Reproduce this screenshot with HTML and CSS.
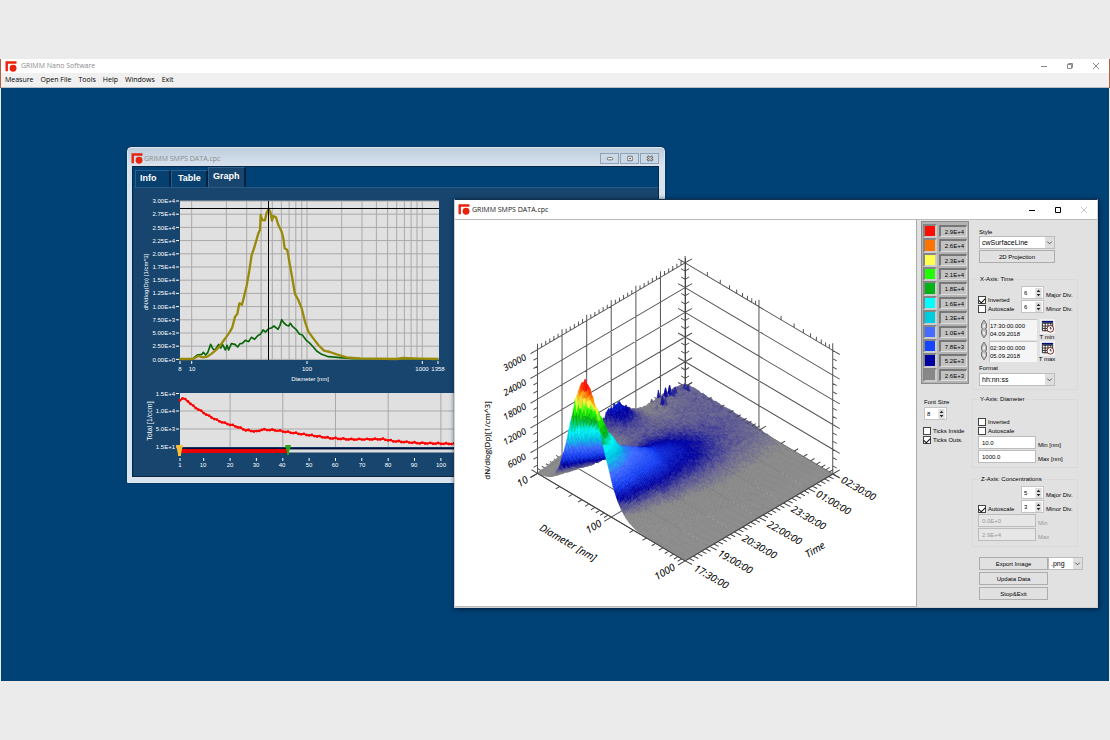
FILE: index.html
```html
<!DOCTYPE html>
<html lang="en">
<head>
<meta charset="utf-8">
<title>GRIMM Nano Software</title>
<link rel="stylesheet" href="styles.css">
</head>
<body>
<svg class="defs" aria-hidden="true">
  <symbol id="logo" viewBox="0 0 34 32"><path d="M1 1h32v7H8v22H1z" fill="#e8240c"/><circle cx="23" cy="21" r="10" fill="#e8240c"/></symbol>
  <symbol id="min" viewBox="0 0 10 10"><path d="M2 5.500h6" stroke="currentColor"/></symbol>
  <symbol id="max" viewBox="0 0 10 10"><path d="M2.500 2.500h5v5h-5z" fill="none" stroke="currentColor"/></symbol>
  <symbol id="restore" viewBox="0 0 10 10"><path d="M2.500 3.500h4v4h-4zM3.500 3V2.500h4v4H7" fill="none" stroke="currentColor"/></symbol>
  <symbol id="close" viewBox="0 0 10 10"><path d="M2 2l6 6M8 2l-6 6" stroke="currentColor"/></symbol>
  <symbol id="chev" viewBox="0 0 10 10"><path d="M2.500 4l2.500 2.500L7.500 4" fill="none" stroke="#444"/></symbol>
  <symbol id="spin" viewBox="0 0 7 11"><path d="M0 0h7v11H0z" fill="#dcdcdc"/><path d="M1.500 4.500l2-2.500 2 2.500zM1.500 6.500l2 2.500 2-2.500z" fill="#222"/></symbol>
  <symbol id="knob" viewBox="0 0 8 20"><path d="M4 1l2.500 4v4L5 10l1.500 1v4L4 19l-2.500-4v-4L3 10 1.500 9V5z" fill="#bbb" stroke="#777"/><path d="M3 6l2-1v3L3 9zM3 12l2 1v3l-2-1z" fill="#eee"/></symbol>
  <symbol id="cal" viewBox="0 0 16 16"><path d="M0 0h16v16H0z" fill="#f2f2f2"/><path d="M2 2h12v2H2z" fill="#00107c"/><path d="M2.500 4.500h11v8h-11zM2.500 7.500h11M2.500 10h11M5.500 4v9M8.500 4v9M11.500 4v9" fill="#fff" stroke="#222"/><circle cx="11" cy="10.500" r="3.500" fill="#fff" stroke="#7d2020"/><path d="M11 8.500v2h1.500" fill="none" stroke="#222"/></symbol>
</svg>
<main class="app">
  <header class="app-head">
    <div class="titlebar">
      <svg class="logo"><use href="#logo"/></svg><h1 class="title">GRIMM Nano Software</h1>
      <button class="win-btn" aria-label="Minimize"><svg><use href="#min"/></svg></button>
      <button class="win-btn" aria-label="Restore"><svg><use href="#restore"/></svg></button>
      <button class="win-btn" aria-label="Close"><svg><use href="#close"/></svg></button>
    </div>
    <nav class="menu"><button>Measure</button><button>Open File</button><button>Tools</button><button>Help</button><button>Windows</button><button>Exit</button></nav>
  </header>
  <section class="desktop">
    <article class="win win-data">
      <div class="data-head">
        <svg class="logo"><use href="#logo"/></svg><h2 class="title">GRIMM SMPS DATA.cpc</h2>
        <button class="mdi-btn" aria-label="Minimize"><svg viewBox="0 0 10 10"><rect x="2" y="4" width="6" height="2.500" rx="1" fill="#fff" stroke="#666"/></svg></button>
        <button class="mdi-btn" aria-label="Maximize"><svg viewBox="0 0 10 10"><path d="M2.500 2.500h5v5h-5z" fill="#fff" stroke="#666"/><path d="M4.500 4.500h1v1h-1z" stroke="#666"/></svg></button>
        <button class="mdi-btn" aria-label="Close"><svg viewBox="0 0 10 10"><path d="M2 2.500l6 5M8 2.500l-6 5" stroke="#666" stroke-width="3"/><path d="M2.500 3l5 4M7.500 3l-5 4" stroke="#fff"/></svg></button>
      </div>
      <div class="data-body">
        <div class="tabs" role="tablist"><button role="tab">Info</button><button role="tab">Table</button><button role="tab" class="on" aria-selected="true">Graph</button></div>
        <div class="page">
          <svg class="plots" viewBox="134 188 524 288">
            <rect x="180" y="201" width="259" height="159" fill="#e0e0e0"/>
            <g id="grid1"></g>
            <g transform="translate(120 140) scale(.33333)" fill="none" stroke-linejoin="round">
              <path stroke="#0a660a" stroke-width="5" d="M178 657H218L232 645 246 643 250 637 257 645 263 638 272 613 279 627 285 630 296 613 302 624 308 614 316 630 321 616 326 630 334 611 345 613 353 621 360 611 367 610 376 601 386 605 394 592 404 598 413 587 421 583 429 570 437 576 446 566 454 564 462 558 474 568 480 556 485 539 492 549 500 556 506 558 511 550 518 560 528 568 538 582 547 585 560 602 570 610 580 621 590 633 605 643 625 650 660 653 700 656 955 657"/>
              <path stroke="#998a0c" stroke-width="7" d="M178 657H218L235 648 248 652 262 650 275 641 290 628 300 618 310 603 318 592 328 578 337 562 345 530 352 522 358 490 366 494 372 470 380 437 388 392 395 345 402 325 408 305 415 280 420 270 422 225 427 240 435 241 440 218 446 206 452 220 456 242 460 228 468 232 475 255 485 275 490 295 494 325 502 330 508 365 516 410 525 462 535 480 545 505 555 545 565 575 580 595 595 615 612 632 630 636 650 643 680 652 720 655 830 657 848 654 900 656 955 657"/>
            </g>
            <path d="M180 208.500h259M268.500 201v159" stroke="#000"/>
            <g class="lab end">
              <text x="175" y="203">3.00E+4</text><text x="175" y="216">2.75E+4</text><text x="175" y="230">2.50E+4</text><text x="175" y="243">2.25E+4</text><text x="175" y="256">2.00E+4</text><text x="175" y="269">1.75E+4</text><text x="175" y="282">1.50E+4</text><text x="175" y="295">1.25E+4</text><text x="175" y="309">1.00E+4</text><text x="175" y="322">7.50E+3</text><text x="175" y="335">5.00E+3</text><text x="175" y="348">2.50E+3</text><text x="175" y="362">0.00E+0</text>
              <text x="175" y="396">1.5E+4</text><text x="175" y="413">1.0E+4</text><text x="175" y="431">5.0E+3</text><text x="175" y="449">1.5E+1</text>
            </g>
            <g class="lab mid">
              <text x="180" y="371">8</text><text x="192" y="371">10</text><text x="307" y="371">100</text><text x="422" y="371">1000</text><text x="438" y="371">1358</text><text x="310" y="381">Diameter [nm]</text>
              <text transform="translate(148 282) rotate(-90)">dN/dlog(Dp) [1/cm^3]</text><text class="seven" transform="translate(152 421) rotate(-90)">Total [1/ccm]</text>
              <text x="180" y="467">1</text><text x="203" y="467">10</text><text x="230" y="467">20</text><text x="256" y="467">30</text><text x="282" y="467">40</text><text x="309" y="467">50</text><text x="335" y="467">60</text><text x="362" y="467">70</text><text x="388" y="467">80</text><text x="414" y="467">90</text><text x="441" y="467">100</text>
            </g>
            <rect x="180" y="393" width="470" height="54" fill="#e0e0e0"/>
            <g id="grid2"></g>
            <path d="M180 448.500h470" stroke="#000f3c" stroke-width="1.500"/><path d="M180 451h470" stroke="#ddd" stroke-width="3"/><path d="M180 451h107" stroke="#e60000" stroke-width="4"/>
            <path d="M176 445h7l-2 9v2h-3v-2z" fill="#f6bf35"/><path d="M285 445h6l-2 7v3h-2v-3z" fill="#2ba318"/>
          </svg>
        </div>
      </div>
    </article>

    <article class="win win-surf">
      <div class="titlebar">
        <svg class="logo"><use href="#logo"/></svg><h2 class="title">GRIMM SMPS DATA.cpc</h2>
        <button class="win-btn" aria-label="Minimize"><svg><use href="#min"/></svg></button>
        <button class="win-btn" aria-label="Maximize"><svg><use href="#max"/></svg></button>
        <button class="win-btn off" aria-label="Close" disabled><svg><use href="#close"/></svg></button>
      </div>
      <div class="surf-body">
        <div class="view">
          <svg viewBox="455 220 460 385" class="scene">
            <g id="walls"></g><g id="surface"></g><g id="front"></g>
            <g class="axis mid">
              <text transform="translate(516 365) rotate(-29)">30000</text><text transform="translate(516 390) rotate(-29)">24000</text><text transform="translate(516 414) rotate(-29)">18000</text><text transform="translate(516 439) rotate(-29)">12000</text><text transform="translate(518 463) rotate(-29)">6000</text>
              <text class="big" transform="translate(524 484) rotate(-31)">10</text><text class="big" transform="translate(595 529) rotate(-31)">100</text><text class="big" transform="translate(666 574) rotate(-31)">1000</text>
              <text class="big" transform="translate(566 545) rotate(30)">Diameter [nm]</text><text class="big" transform="translate(816 552) rotate(-31)">Time</text>
              <text class="up" transform="translate(490 440) rotate(-90)">dN/dlog(Dp)[1/cm^3]</text>
              <text class="big" transform="translate(709 579) rotate(30)">17:30:00</text><text class="big" transform="translate(733 564) rotate(30)">19:00:00</text><text class="big" transform="translate(757 549) rotate(30)">20:30:00</text><text class="big" transform="translate(782 535) rotate(30)">22:00:00</text><text class="big" transform="translate(806 520) rotate(30)">23:30:00</text><text class="big" transform="translate(831 505) rotate(30)">01:00:00</text><text class="big" transform="translate(856 491) rotate(30)">02:30:00</text>
            </g>
          </svg>
        </div>
        <aside class="side">
          <div class="side-l">
            <ul class="legend">
              <li><i class="c1"></i><span>2.9E+4</span></li><li><i class="c2"></i><span>2.6E+4</span></li><li><i class="c3"></i><span>2.3E+4</span></li><li><i class="c4"></i><span>2.1E+4</span></li><li><i class="c5"></i><span>1.8E+4</span></li><li><i class="c6"></i><span>1.6E+4</span></li><li><i class="c7"></i><span>1.3E+4</span></li><li><i class="c8"></i><span>1.0E+4</span></li><li><i class="c9"></i><span>7.8E+3</span></li><li><i class="c10"></i><span>5.2E+3</span></li><li><i class="c11"></i><span>2.6E+3</span></li>
            </ul>
            <label class="cap" for="fs">Font Size</label>
            <div class="spin"><input id="fs" value="8"><svg><use href="#spin"/></svg></div>
            <div class="checks ticks"><label><input type="checkbox">Ticks Inside</label><label><input type="checkbox" checked>Ticks Outs.</label></div>
          </div>
          <div class="side-r">
            <label class="cap" for="style">Style</label>
            <div class="combo"><select id="style"><option>cwSurfaceLine</option></select><svg><use href="#chev"/></svg></div>
            <button class="btn proj">2D Projection</button>
            <fieldset class="group gx"><legend>X-Axis: Time</legend>
              <div class="row">
                <div class="checks"><label><input type="checkbox" checked>Inverted</label><label><input type="checkbox">Autoscale</label></div>
                <div class="divs">
                  <label><span class="spin"><input value="6"><svg><use href="#spin"/></svg></span>Major Div.</label>
                  <label><span class="spin"><input value="6"><svg><use href="#spin"/></svg></span>Minor Div.</label>
                </div>
              </div>
              <div class="date"><svg class="knob"><use href="#knob"/></svg><textarea aria-label="T min" rows="2">17:30:00.000
04.09.2018</textarea><button class="cal"><svg><use href="#cal"/></svg>T min</button></div>
              <div class="date"><svg class="knob"><use href="#knob"/></svg><textarea aria-label="T max" rows="2">02:30:00.000
05.09.2018</textarea><button class="cal"><svg><use href="#cal"/></svg>T max</button></div>
              <label class="cap" for="fmt">Format</label>
              <div class="combo"><select id="fmt"><option>hh:nn:ss</option></select><svg><use href="#chev"/></svg></div>
            </fieldset>
            <fieldset class="group gy"><legend>Y-Axis: Diameter</legend>
              <div class="checks"><label><input type="checkbox">Inverted</label><label><input type="checkbox">Autoscale</label></div>
              <label class="field"><input value="10.0">Min [nm]</label>
              <label class="field"><input value="1000.0">Max [nm]</label>
            </fieldset>
            <fieldset class="group gz"><legend>Z-Axis: Concentrations</legend>
              <div class="row">
                <div class="checks"><label><input type="checkbox" checked>Autoscale</label></div>
                <div class="divs">
                  <label><span class="spin"><input value="5"><svg><use href="#spin"/></svg></span>Major Div.</label>
                  <label><span class="spin"><input value="3"><svg><use href="#spin"/></svg></span>Minor Div.</label>
                </div>
              </div>
              <label class="field dim"><input value="0.0E+0" disabled>Min</label>
              <label class="field dim"><input value="2.9E+4" disabled>Max</label>
            </fieldset>
            <div class="actions">
              <div class="row"><button class="btn">Export Image</button><div class="combo ext"><select aria-label="Image type"><option>.png</option></select><svg><use href="#chev"/></svg></div></div>
              <button class="btn">Updata Data</button>
              <button class="btn">Stop&amp;Exit</button>
            </div>
          </div>
        </aside>
      </div>
    </article>
  </section>
</main>
<script src="charts.js"></script>
</body>
</html>
```
FILE: styles.css
```css
* { box-sizing: border-box; }
body { margin: 0; padding: 59px 0; min-height: 100vh; background: #ebebeb; font-family: "Liberation Sans", Arial, sans-serif; font-size: 6px; line-height: 8px; color: #000; display: flex; }
button, input, select, textarea { font: inherit; color: inherit; border-radius: 0; margin: 0; }
.defs { position: absolute; width: 0; height: 0; }
.app { flex: 1; display: flex; flex-direction: column; }
.app-head { border: 0 solid #b2603f; border-width: 0 1px; background: #f0f0f0; }
.titlebar { display: flex; align-items: center; background: #fff; height: 14px; padding: 0 0 0 4px; }
.logo { width: 12px; height: 11px; flex: none; }
.title { margin: 0 auto 0 4px; font: 7px/10px "Open Sans", "Noto Sans", sans-serif; color: #8c8c8c; }
.win-btn { width: 26px; height: 14px; padding: 0; border: 0; background: none; color: #888; display: grid; place-items: center; }
.win-btn svg { width: 10px; height: 10px; }
.menu { display: flex; gap: 7px; height: 15px; padding: 0 4px; border-bottom: 1px solid #b9bfc5; }
.menu button { padding: 0; border: 0; background: none; font: 7px/12px "Open Sans", "Noto Sans", sans-serif; }
.desktop { position: relative; flex: 1; min-height: 593px; margin: 0 1px; background: #004275; }
.win { position: absolute; }

.win-data { left: 126px; top: 59px; width: 538px; background: linear-gradient(#becddd, #d8e3ee 18px); border: 1px solid #dfe8f0; border-radius: 4px 4px 0 0; box-shadow: 0 0 2px #001f40; padding: 0 5px 5px 4px; }
.data-head { display: flex; align-items: center; height: 18px; padding-top: 3px; }
.data-head .logo { margin-left: -1px; }
.data-head .title { margin-left: 1px; }
.mdi-btn { width: 19px; height: 11px; margin-left: 1px; padding: 0; border: 1px solid #8fa3b8; background: #cbd8e5; display: grid; place-items: center; }
.mdi-btn svg { width: 10px; height: 9px; }
.data-body { background: #004275; border: 1px solid #0a2742; padding-left: 1px; }
.tabs { display: flex; align-items: flex-end; height: 20px; padding-left: 1px; }
.tabs button { width: 36px; height: 17px; padding: 0 0 2px 4px; border: 1px solid #2c618f; border-width: 1px 2px 0 1px; border-right-color: #002444; background: #073f6e; color: #fff; font-weight: bold; font-size: 9px; line-height: 10px; text-align: left; }
.tabs button:nth-child(2) { padding-left: 6px; width: 37px; }
.tabs .on { height: 20px; width: 38px; background: #17456e; padding-bottom: 3px; }
.page { background: #17456e; border-top: 1px solid #275a86; }
.plots { display: block; width: 100%; }
.lab { font-size: 6px; fill: #fff; }
.lab .seven { font-size: 7px; }
.end { text-anchor: end; }
.mid { text-anchor: middle; }

.win-surf { left: 453px; top: 111px; width: 644px; background: #fff; border: 1px solid #cfcfcf; border-top-color: #15304a; box-shadow: 1px 1px 5px #001c3a; }
.win-surf .titlebar { height: 19px; padding-left: 3px; }
.win-surf .title { color: #222; margin-left: 2px; }
.win-surf .win-btn { color: #000; }
.win-surf .off { color: #c4c4c4; }
.surf-body { display: flex; border-top: 1px solid #bbb; }
.view { flex: 1; border-right: 1px solid #aaa; border-bottom: 1px solid #bbb; }
.scene { display: block; width: 100%; }
.axis { font: italic 9px "Open Sans", "Noto Sans", sans-serif; fill: #000; stroke: #000; stroke-width: .1; }
.axis .big { font-size: 10px; }
.axis .up { font-size: 8px; font-style: normal; }
.side { width: 180px; flex: none; background: #e1e1e1; display: flex; padding: 1px 4px; gap: 3px; }
.side-l { width: 48px; flex: none; }
.side-r { flex: 1; padding-top: 7px; }
.legend { list-style: none; margin: 0 0 14px; padding: 2px 1px 1px; height: 163px; background: #b3b3b3; border: 1px solid #8b8b8b; display: grid; grid-auto-rows: 1fr; }
.legend li { display: flex; gap: 2px; }
.legend i { width: 14px; border: 2px solid #858585; border-right-color: #ccc; border-bottom-color: #ccc; }
.legend span { flex: 1; margin: 1px 0; border: 1px solid #777; border-width: 2px 1px 1px 2px; border-right-color: #ddd; border-bottom-color: #ddd; background: #c2c2c2; text-align: right; padding: 1px 2px 0 0; }
.c1 { background: #ff0c00; } .c2 { background: #ff7300; } .c3 { background: #ffff50; } .c4 { background: #22ff00; } .c5 { background: #00b418; } .c6 { background: #00ffff; } .c7 { background: #00cce0; } .c8 { background: #466cff; } .c9 { background: #1446ff; } .c10 { background: #0000a0; } .c11 { background: #888; }
.cap { display: block; margin-left: 3px; }
.side-r > .cap { margin-left: 7px; }
.spin { display: flex; width: 23px; height: 13px; background: #fff; border: 1px solid #c4c4c4; align-items: center; margin: 0; }
.side-l .spin { margin: 1px 3px 6px; }
.spin input { width: 13px; border: 0; padding: 0 0 0 2px; height: 9px; background: none; }
.spin svg { width: 7px; height: 10px; }
.checks { display: flex; flex-direction: column; }
.checks label { display: flex; align-items: center; gap: 2px; height: 9px; white-space: nowrap; }
.checks input { appearance: none; flex: none; width: 8px; height: 8px; border: 1px solid #444; background: #fff; display: grid; place-items: center; }
.checks input:checked::before { content: ""; width: 5px; height: 3px; border: solid #111; border-width: 0 0 1px 1px; transform: rotate(-45deg); }
.ticks { margin-left: 2px; }
.combo { position: relative; width: 76px; height: 13px; }
.side-r > .combo, .proj { margin-left: 7px; }
.combo select { appearance: none; width: 100%; height: 100%; padding: 0 2px; border: 1px solid #bcbcbc; background: #fff; font-size: 7px; display: block; }
.combo svg { position: absolute; right: 1px; top: 1px; width: 9px; height: 11px; background: #dedede; pointer-events: none; }
.btn { display: block; width: 69px; height: 13px; padding: 0; border: 1px solid #adadad; background: #e1e1e1; text-align: center; }
.side-r .proj { width: 76px; margin-top: 1px; }
.group { position: relative; margin: 0; padding: 0 0 0 5px; border: 1px solid #dadada; min-width: 0; width: 106px; }
.group legend { padding: 0 1px; margin-left: 1px; line-height: 8px; }
.row { display: flex; }
.group .row { justify-content: space-between; align-items: flex-end; }
.divs { width: 56px; display: flex; flex-direction: column; gap: 1px; }
.divs label { display: flex; gap: 2px; align-items: flex-end; white-space: nowrap; height: 13px; }
.gx { margin-top: 12px; }
.gx .row { margin: 3px 0 6px; }
.date { display: flex; height: 22px; }
.knob { width: 8px; height: 20px; margin: 0 1px 0 2px; }
.date textarea { width: 48px; height: 21px; padding: 2px 0 0; border: 1px solid #c4c4c4; border-width: 1px 0 0 1px; background: #f5f5f5; resize: none; overflow: hidden; line-height: 8px; }
.cal { width: 20px; padding: 0; border: 0; background: none; line-height: 6px; display: flex; flex-direction: column; align-items: center; }
.cal svg { width: 15px; height: 15px; flex: none; }
.gx .cap { margin-left: 1px; margin-top: 1px; }
.gx .combo { margin-left: 1px; margin-top: 1px; margin-bottom: 3px; }
.gy { margin-top: 5px; padding-bottom: 3px; }
.gy .checks { margin: 14px 0 1px; }
.field { display: flex; gap: 2px; height: 13px; margin-bottom: 1px; align-items: flex-end; }
.field input { width: 58px; height: 13px; padding: 0 3px; border: 1px solid #bcbcbc; background: #fff; }
.dim { color: #999; }
.dim input { background: #e6e6e6; }
.gz { margin-top: 7px; padding-bottom: 4px; }
.gz legend { margin-left: 2px; }
.gz .row { margin: 3px 0 1px; }
.actions { margin: 10px 0 3px 7px; display: flex; flex-direction: column; gap: 2px; }
.ext { width: 35px; }
```
FILE: charts.js
```js
const line = (x1, y1, x2, y2) => `M${x1.toFixed(1)} ${y1.toFixed(1)}L${x2.toFixed(1)} ${y2.toFixed(1)}`;
const path = (d, stroke, w = 1) => `<path d="${d}" fill="none" stroke="${stroke}" stroke-width="${w}"/>`;
const put = (id, html) => { document.getElementById(id).innerHTML = html; };

// Seeded noise keeps the picture the same on each load.
let seed = 7;
const rnd = () => { seed = (seed * 16807) % 2147483647; return seed / 2147483647; };

// Linear interpolation in a table of [x, y] pairs.
const lerp = (table, x) => {
  let s = 0;
  while (s < table.length - 2 && table[s + 1][0] < x) s++;
  const [a, ya] = table[s], [b, yb] = table[s + 1];
  return ya + (yb - ya) * (x - a) / (b - a);
};

// Size distribution grid: linear rows, logarithmic columns.
let g = '', ticks = '';
for (let i = 0; i <= 12; i++) {
  const y = 201 + i * 13.2;
  g += line(180, y, 439, y);
  ticks += line(176, y, 179, y);
}
for (let e = 1; e <= 3; e++) for (let m = 1; m <= 9; m++) {
  const x = 191.7 + (e - 1 + Math.log10(m)) * 115.3;
  if (x < 439) g += line(x, 201, x, 360);
}
[180, 191.7, 307, 422.3, 438].forEach(x => { ticks += line(x, 361, x, 364); });
put('grid1', path(g, '#a9a9a9') + path(ticks, '#fff'));

// Total concentration over the scan number.
const total = [[1, 400], [2, 398], [4, 401], [6, 406], [9, 411], [12, 416], [15, 420], [18, 423], [22, 426], [26, 430], [30, 431.5], [32, 429.5], [37, 430], [42, 432], [50, 435], [58, 438], [66, 439.3], [78, 439], [82, 441], [92, 443], [110, 444], [140, 445]];
let g2 = '', t2 = '', curve = 'M', dots = '';
for (let n = 1; n < 120; n++) {
  const x = 180 + (n - 1) * 2.635, y = lerp(total, n) + (n % 3 ? .4 : -.4);
  curve += `${x.toFixed(1)} ${y.toFixed(1)} `;
  dots += `<circle cx="${x.toFixed(1)}" cy="${y.toFixed(1)}" r="1.4"/>`;
  if (n === 1 || n % 10 === 0) t2 += line(x, 458, x, 461);
  if (n % 20 === 0) g2 += line(x, 393, x, 447);
}
[411, 429].forEach(y => { g2 += line(180, y, 650, y); });
[393.5, 411, 429, 447].forEach(y => { t2 += line(176, y, 179, y); });
put('grid2', path(g2, '#a9a9a9') + path(t2, '#fff') + path(curve, '#f00', 1.5) + `<g fill="#f00">${dots}</g>`);

// Surface plot: d = log diameter, t = time, z = concentration, each 0..1.
const P = (d, t, z) => [537.3 + 147.3 * (d + t), 472.8 + 87.3 * d - 86.6 * t - 123.4 * z];
const seg = (a, dx, dy) => line(a[0], a[1], a[0] + dx, a[1] + dy);
const span = (a, b) => line(a[0], a[1], b[0], b[1]);
let w = '', front = '', faint = '';
for (let k = 0; k <= 5; k++) {
  w += span(P(0, 0, k / 5), P(0, 1, k / 5)) + span(P(0, 1, k / 5), P(1, 1, k / 5));
  w += seg(P(0, 1, k / 5), 7, -4) + seg(P(0, 1, k / 5), -7, -4);
}
for (let k = 0; k <= 15; k++) {
  const l = k % 3 ? 4 : 7;
  w += seg(P(0, 0, k / 15), -l, l * .58) + seg(P(1, 1, k / 15), l, l * .58);
  w += seg(P(0, 1, k / 15), 4, -2.5) + seg(P(0, 1, k / 15), -4, -2.5);
}
for (let k = 0; k <= 36; k++) {
  const l = k % 6 ? 4 : 6, t = k / 36;
  if (k % 6 === 0) w += span(P(0, t, 0), P(0, t, 1)) + span(P(0, t, 0), P(1, t, 0));
  if (k % 6 === 0 && k && k < 36) faint += span(P(.82, t, 0), P(.97, t, 0));
  w += seg(P(0, t, 1), 0, -l) + seg(P(0, t, 0), -l, -l * .6);
  front += seg(P(1, t, 0), l + 1, l * .6);
}
for (let e = 0; e <= 2; e++) for (let m = 1; m <= 9; m++) {
  const d = (e + Math.log10(m)) / 2, l = m === 1 ? 7 : 4;
  if (d > 1) continue;
  if (m === 1) w += span(P(d, 1, 0), P(d, 1, 1)) + span(P(d, 0, 0), P(d, 1, 0));
  w += seg(P(d, 1, 1), 0, -l);
  front += seg(P(d, 1, 0), l, -l * .6);
  front += seg(P(d, 0, 0), -l, l * .6);
}
front += span(P(0, 0, 0), P(1, 0, 0)) + span(P(1, 0, 0), P(1, 1, 0));
put('walls', path(w, '#555') + path(line(685, 258, 685, 387), '#444'));
put('front', path(front, '#444') + `<path d="${faint}" stroke="#aaa" stroke-width=".7" stroke-dasharray="3 2"/>`);

const stops = [[0, 136, 136, 136], [2, 134, 134, 134], [3.4, 92, 88, 145], [5.2, 0, 0, 160], [7.4, 20, 60, 240], [10, 60, 104, 255], [13, 0, 200, 226], [15.5, 0, 250, 250], [18, 0, 165, 20], [21, 30, 250, 0], [23, 250, 250, 60], [26, 255, 110, 0], [28, 255, 10, 0], [40, 255, 0, 0]];
const colour = v => {
  let i = 0;
  while (stops[i + 1][0] < v) i++;
  const a = stops[i], b = stops[i + 1], f = (v - a[0]) / (b[0] - a[0]);
  return `rgb(${[1, 2, 3].map(c => Math.round(a[c] + (b[c] - a[c]) * f)).join()})`;
};
const crest = [[0, 29], [.02, 25], [.08, 17], [.16, 11], [.265, 8.6], [.38, 5.8], [.54, 4], [.75, 2.2], [1, 1.2]];
const height = (d, t) => {
  const mu = .317 + .28 * t / (t + .45);
  const s = d < mu ? .09 + .1 * t : .12 + .1 * t;
  const main = lerp(crest, t) * Math.exp(-.5 * ((d - mu) / s) ** 2);
  const burst = 2.8 * Math.exp(-(((t - .52) / .09) ** 2)) * Math.exp(-((d / .1) ** 2));
  const dip = 1 - .3 * Math.exp(-(((t - .72) / .1) ** 2) - (d / .16) ** 2);
  const haze = 3.2 * dip * Math.min(1, t * 2) * Math.exp(-((d / (.4 + .22 * t)) ** 2));
  const v = main + burst + haze;
  let n = (rnd() - .5) * (.2 + v * .05 * (d < .7 ? 1 : .3));
  if (d < .1) n += (rnd() - .4) * burst * .7;
  if (d < .08 && t > .72 && rnd() > .95) n += 2.2 * rnd();
  return Math.max(0, v + n);
};
const N = 90, M = 110, H = [];
for (let j = 0; j <= M; j++) { H.push([]); for (let i = 0; i <= N; i++) H[j].push(height(i / N, j / M)); }
let quads = '';
for (let j = M - 1; j >= 0; j--) for (let i = 0; i < N; i++) {
  const q = [[i, j], [i + 1, j], [i + 1, j + 1], [i, j + 1]];
  const hs = q.map(([a, b]) => H[b][a]);
  const v = i < 10 && j > 75 ? Math.max(...hs) - .2 : (hs[0] + hs[1] + hs[2] + hs[3]) / 4;
  const c = colour(v + (v < 6 && v > 1.5 ? (rnd() - .5) * .7 : 0));
  // Far rows lie close to the floor plane.
  const lift = (a, b) => Math.max(0, H[b][a] - 2.4 * (b / M) ** 2) / 30;
  quads += `<polygon points="${q.map(([a, b]) => P(a / N, b / M, lift(a, b)).map(n => n.toFixed(1)).join()).join(' ')}" fill="${c}" stroke="${c}" stroke-width=".5"/>`;
}
put('surface', quads);
```
